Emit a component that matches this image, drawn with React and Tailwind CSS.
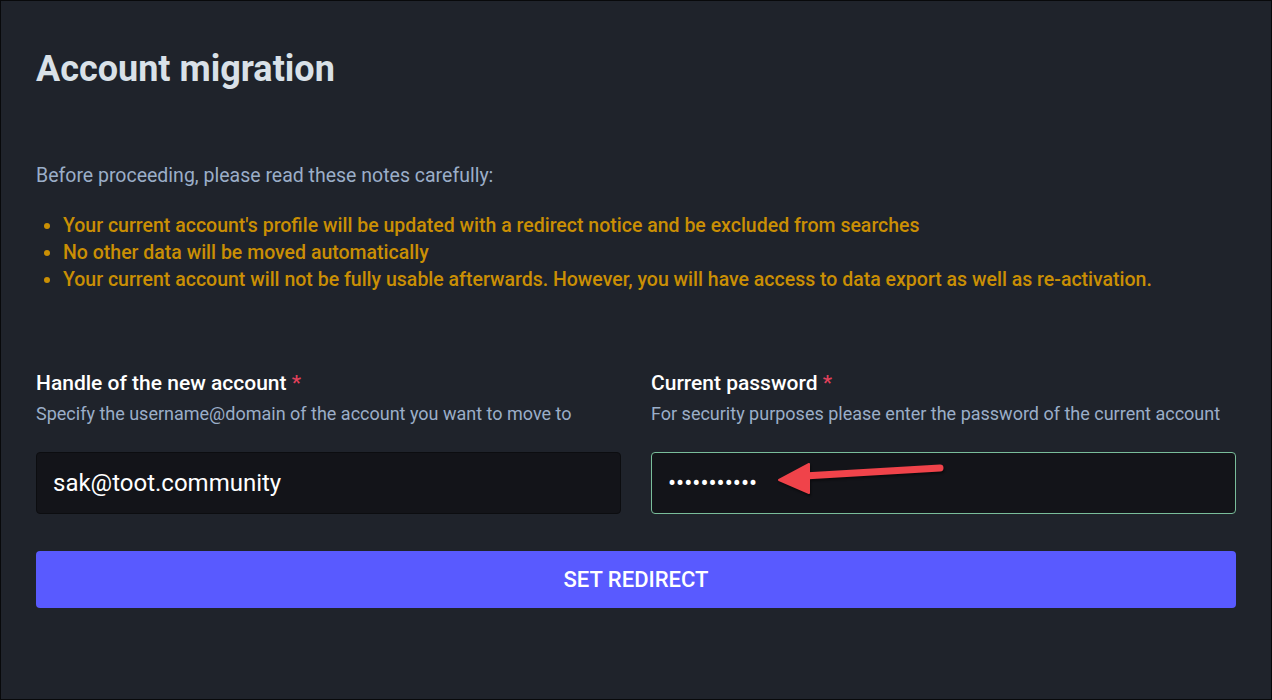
import React from "react";

const notes = [
  "Your current account's profile will be updated with a redirect notice and be excluded from searches",
  "No other data will be moved automatically",
  "Your current account will not be fully usable afterwards. However, you will have access to data export as well as re-activation.",
];

function Field({ label, hint, children, active }) {
  return (
    <div className="flex-1 min-w-0">
      <label className="block text-[21px] leading-[27px] font-medium text-white">
        {label} <span className="text-[#df405a]">*</span>
      </label>
      <p className="mt-[5px] text-[18px] leading-[24px] text-[#9baec8] whitespace-nowrap">{hint}</p>
      <div
        className={
          "relative mt-[26px] h-[62px] rounded-[4px] bg-[#131419] border flex items-center px-[16px] text-[24px] text-white " +
          (active ? "border-[#79bd9a]" : "border-[#0c0d10]")
        }
      >
        {children}
      </div>
    </div>
  );
}

export default function App() {
  return (
    <div
      className="w-full h-[700px] bg-[#1f232b] border border-[#08090b] px-[35px] pt-[48px]"
      style={{ fontFamily: "Roboto, 'Liberation Sans', sans-serif" }}
    >
      <h2 className="text-[36px] leading-[40px] font-bold text-[#d9e1e8]">Account migration</h2>

      <p className="mt-[73px] text-[19.5px] leading-[27px] text-[#9baec8]">
        Before proceeding, please read these notes carefully:
      </p>

      <ul className="mt-[23px] list-disc pl-[27px] text-[19.5px] leading-[27px] font-medium text-[#ca8f04]">
        {notes.map((n, i) => (
          <li key={i}>{n}</li>
        ))}
      </ul>

      <div className="mt-[77px] flex gap-[30px]">
        <Field
          label="Handle of the new account"
          hint="Specify the username@domain of the account you want to move to"
        >
          sak@toot.community
        </Field>
        <Field
          label="Current password"
          hint="For security purposes please enter the password of the current account"
          active
        >
          <span className="text-[24px]">•••••••••••</span>
          <svg
            className="absolute left-0 top-0 overflow-visible"
            width="300"
            height="60"
            viewBox="0 0 300 60"
          >
            <g style={{ filter: "drop-shadow(1px 2px 1px rgba(0,0,0,0.45))" }}>
              <line x1="152" y1="23" x2="288" y2="15" stroke="#f0434a" strokeWidth="7" strokeLinecap="round" />
              <polygon points="127,27 157,11 157,40" fill="#f0434a" strokeLinejoin="round" stroke="#f0434a" strokeWidth="2" />
            </g>
          </svg>
        </Field>
      </div>

      <button className="mt-[37px] w-full h-[57px] rounded-[4px] bg-[#595aff] text-white text-[22px] font-medium uppercase">
        Set redirect
      </button>
    </div>
  );
}
